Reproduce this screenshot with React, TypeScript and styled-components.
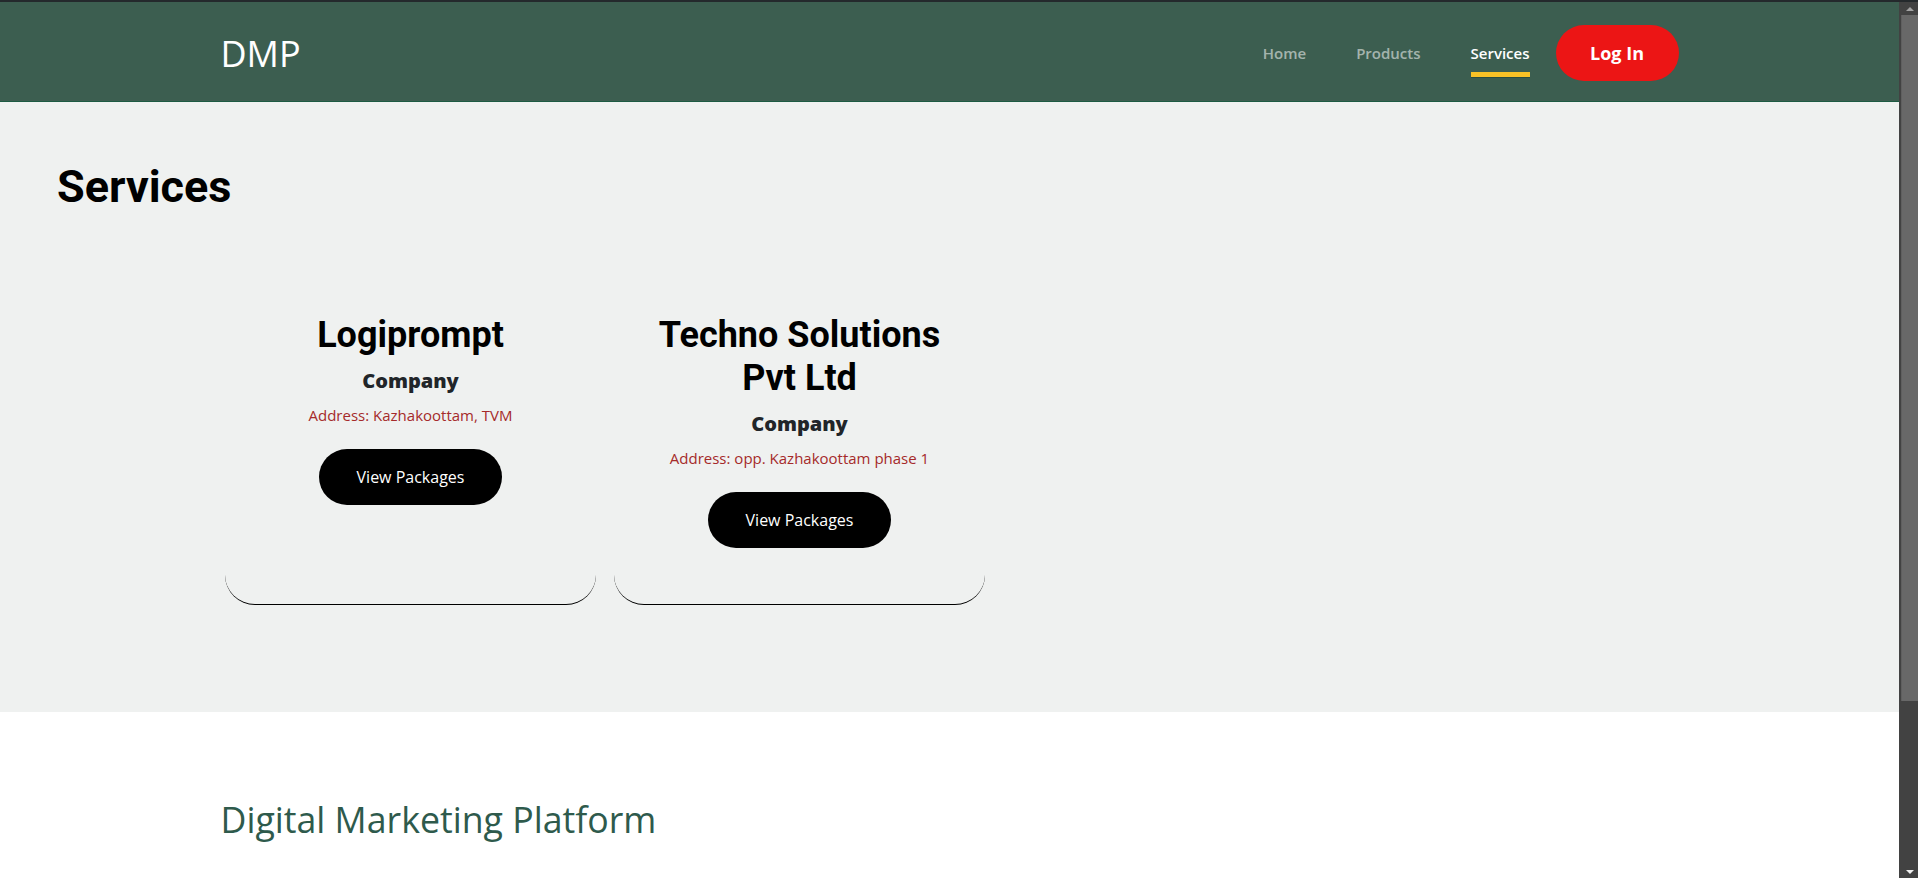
import * as React from "react";
import styled, { createGlobalStyle } from "styled-components";

const GlobalStyle = createGlobalStyle`
  html, body {
    margin: 0;
    padding: 0;
  }
  body {
    font-family: "Open Sans", "Liberation Sans", sans-serif;
    background: #ffffff;
    color: #212529;
  }
  * {
    box-sizing: border-box;
  }
`;

type Company = {
  name: string;
  kind: string;
  address: string;
};

const companies: Company[] = [
  { name: "Logiprompt", kind: "Company", address: "Kazhakoottam, TVM" },
  {
    name: "Techno Solutions Pvt Ltd",
    kind: "Company",
    address: "opp. Kazhakoottam phase 1",
  },
];

const navLinks = ["Home", "Products", "Services"];

export default function App() {
  const active = "Services";

  return (
    <Styled.Layout>
      <GlobalStyle />
      <Styled.Main>
        <Styled.Header>
          <Styled.NavInner>
            <Styled.Brand>DMP</Styled.Brand>
            <Styled.NavList>
              {navLinks.map((link) => (
                <Styled.NavLink key={link} $active={link === active}>
                  {link}
                </Styled.NavLink>
              ))}
              <Styled.LoginButton>Log In</Styled.LoginButton>
            </Styled.NavList>
          </Styled.NavInner>
        </Styled.Header>

        <Styled.ServicesSection>
          <Styled.PageTitle>Services</Styled.PageTitle>
          <Styled.CardRow>
            {companies.map((c) => (
              <Styled.Card key={c.name}>
                <Styled.CardTitle>{c.name}</Styled.CardTitle>
                <Styled.CardKind>{c.kind}</Styled.CardKind>
                <Styled.Address>Address: {c.address}</Styled.Address>
                <Styled.PackagesButton>View Packages</Styled.PackagesButton>
              </Styled.Card>
            ))}
          </Styled.CardRow>
        </Styled.ServicesSection>

        <Styled.Footer>
          <Styled.FooterInner>
            <Styled.FooterTitle>Digital Marketing Platform</Styled.FooterTitle>
          </Styled.FooterInner>
        </Styled.Footer>
      </Styled.Main>

      {/* window scrollbar, as seen in the screenshot */}
      <Styled.ScrollRail>
        <Styled.ArrowUp />
        <Styled.Thumb />
        <Styled.ArrowDown />
      </Styled.ScrollRail>
    </Styled.Layout>
  );
}

const Layout = styled.div`
  display: flex;
  align-items: flex-start;
  border-top: 2px solid #24292c;
`;

const Main = styled.main`
  flex: 1;
  min-width: 0;
`;

const Header = styled.header`
  background: #3c5e50;
  border-bottom: 1px solid #1d5a42;
  height: 100px;
`;

const NavInner = styled.nav`
  width: 1458px;
  height: 100%;
  margin: 0 auto;
  display: flex;
  align-items: center;
  justify-content: space-between;
`;

const Brand = styled.div`
  font-family: "Open Sans", sans-serif;
  font-size: 36px;
  color: #ffffff;
  line-height: 1;
  margin-top: 4px;
`;

const NavList = styled.div`
  display: flex;
  align-items: center;
  margin-top: 3px;
`;

const NavLink = styled.a<{ $active?: boolean }>`
  position: relative;
  margin: 0 25px;
  font-size: 15px;
  font-weight: 600;
  line-height: 20px;
  color: ${(p) => (p.$active ? "#ffffff" : "rgba(255, 255, 255, 0.55)")};
  cursor: pointer;

  &:last-of-type {
    margin-right: 26px;
  }

  &::after {
    content: "";
    display: ${(p) => (p.$active ? "block" : "none")};
    position: absolute;
    left: 0;
    right: 0;
    bottom: -15px;
    height: 5px;
    background: #f9c226;
    border-bottom: 1px solid #2b4d40;
  }
`;

const LoginButton = styled.button`
  width: 123px;
  height: 56px;
  border: none;
  border-radius: 28px;
  background: #ec1515;
  color: #ffffff;
  font-family: "Open Sans", sans-serif;
  font-size: 18px;
  font-weight: 700;
  cursor: pointer;
`;

const ServicesSection = styled.section`
  background: #eff1f0;
  padding: 58px 57px 107px;
`;

const PageTitle = styled.h1`
  margin: 0;
  font-family: Roboto, "Liberation Sans", sans-serif;
  font-size: 45px;
  font-weight: 700;
  line-height: 1.2;
  color: #000000;
`;

const CardRow = styled.div`
  display: flex;
  align-items: stretch;
  gap: 18px;
  margin-top: 50px;
  padding-left: 168px;
`;

const Card = styled.div`
  width: 371px;
  padding: 50px 20px 56px;
  display: flex;
  flex-direction: column;
  align-items: center;
  text-align: center;
  border-bottom: 1px solid #000000;
  border-radius: 30px;
`;

const CardTitle = styled.h2`
  margin: 0;
  font-family: Roboto, "Liberation Sans", sans-serif;
  font-size: 36px;
  font-weight: 700;
  line-height: 1.2;
  color: #000000;
`;

const CardKind = styled.h5`
  margin: 12px 0 0;
  font-size: 20px;
  font-weight: 800;
  line-height: 24px;
  color: #212529;
`;

const Address = styled.p`
  margin: 11px 0 0;
  font-size: 15px;
  line-height: 22.5px;
  color: #a52a2a;
`;

const PackagesButton = styled.button`
  margin-top: 22px;
  height: 56px;
  padding: 0 38px;
  border: none;
  border-radius: 28px;
  background: #000000;
  color: #ffffff;
  font-family: "Open Sans", sans-serif;
  font-size: 16px;
  cursor: pointer;
`;

const Footer = styled.footer`
  background: #ffffff;
  padding: 86px 0 400px;
`;

const FooterInner = styled.div`
  width: 1458px;
  margin: 0 auto;
`;

const FooterTitle = styled.h2`
  margin: 0;
  font-size: 35.7px;
  font-weight: 400;
  line-height: 1.2;
  color: #2e5a4c;
`;

const ScrollRail = styled.div`
  position: sticky;
  top: 0;
  width: 19px;
  height: calc(100vh - 2px);
  flex-shrink: 0;
  display: flex;
  flex-direction: column;
  align-items: flex-end;
  background: #424242;
`;

const ArrowUp = styled.div`
  height: 13px;
  width: 17px;
  display: flex;
  justify-content: center;
  align-items: center;

  &::before {
    content: "";
    border-left: 4px solid transparent;
    border-right: 4px solid transparent;
    border-bottom: 4px solid #a3a3a3;
  }
`;

const Thumb = styled.div`
  width: 17px;
  height: 686px;
  background: #686868;
  border-left: 1px solid #5f5f5f;
`;

const ArrowDown = styled.div`
  margin-top: auto;
  height: 13px;
  width: 17px;
  display: flex;
  justify-content: center;
  align-items: center;

  &::before {
    content: "";
    border-left: 4px solid transparent;
    border-right: 4px solid transparent;
    border-top: 4px solid #f0f0f0;
  }
`;

const Styled = {
  Layout,
  Main,
  Header,
  NavInner,
  Brand,
  NavList,
  NavLink,
  LoginButton,
  ServicesSection,
  PageTitle,
  CardRow,
  Card,
  CardTitle,
  CardKind,
  Address,
  PackagesButton,
  Footer,
  FooterInner,
  FooterTitle,
  ScrollRail,
  ArrowUp,
  Thumb,
  ArrowDown,
};
